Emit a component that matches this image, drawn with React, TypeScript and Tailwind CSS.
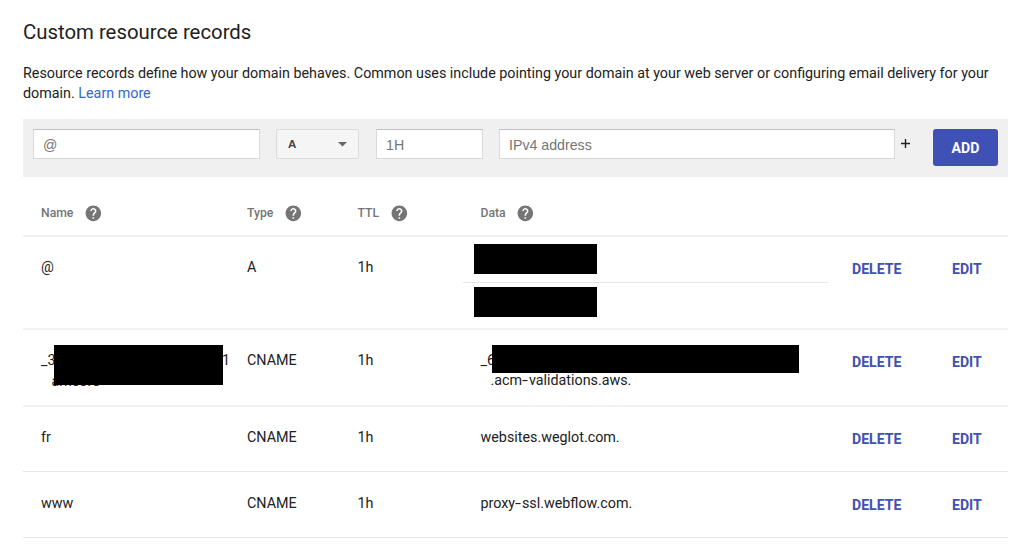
import React from "react";
import { MdHelp } from "react-icons/md";

type DnsRecord = {
  name: React.ReactNode;
  type: string;
  ttl: string;
  data: React.ReactNode;
  row: string;
};

const columns = "grid grid-cols-[206px_110.5px_123px_371.5px_100px_1fr]";

function Hyphen() {
  return <span className="mr-[2.8px] inline-block origin-left scale-x-150">-</span>;
}

const records: DnsRecord[] = [
  {
    name: "@",
    type: "A",
    ttl: "1h",
    data: (
      <div className="-mt-[13px] -ml-[17.5px] w-[365px]">
        <div className="ml-[11px] h-[30px] w-[123px] bg-black" />
        <div className="mt-2 h-px bg-[#e6e6e6]" />
        <div className="mt-1 ml-[11px] h-[30px] w-[123px] bg-black" />
      </div>
    ),
    row: "h-[93px] border-b-2 border-[#f2f2f2] pt-5",
  },
  {
    name: (
      <div className="relative">
        <div className="flex w-[189px] justify-between">
          <span>_3</span>
          <span>1</span>
        </div>
        <div className="pt-px pl-[10.5px]">amcoro</div>
        <div className="absolute top-[-5px] left-[13px] h-[40px] w-[169px] bg-black" />
      </div>
    ),
    type: "CNAME",
    ttl: "1h",
    data: (
      <div className="relative">
        <div>_6</div>
        <div className="pl-[10px]">
          .acm
          <Hyphen />
          validations.aws.
        </div>
        <div className="absolute top-[-5px] left-[11.4px] h-[28px] w-[307px] bg-black" />
      </div>
    ),
    row: "h-[77px] border-b-2 border-[#f2f2f2] pt-5",
  },
  { name: "fr", type: "CNAME", ttl: "1h", data: "websites.weglot.com.", row: "h-[65px] border-b border-[#e8e8e8] pt-5" },
  {
    name: "www",
    type: "CNAME",
    ttl: "1h",
    data: (
      <>
        proxy
        <Hyphen />
        ssl.webflow.com.
      </>
    ),
    row: "h-[66px] border-b border-[#e8e8e8] pt-[21px]",
  },
];

const headings = ["Name", "Type", "TTL", "Data"];

const field =
  "h-[30px] border border-[#d9d9d9] border-t-[#c0c0c0] bg-white px-[9px] pt-0.5 font-['Liberation_Sans',sans-serif] text-[14.2px] text-[#212121] outline-none placeholder:text-[#757575]";

export default function App() {
  return (
    <main className="h-[553px] overflow-hidden bg-white pr-4 pl-[23px] font-[Roboto,sans-serif] text-[14.32px] leading-5 text-[#212121]">
      <h1 className="pt-[20px] text-[20.35px] leading-[25px]">Custom resource records</h1>
      <p className="mt-[18px] whitespace-nowrap">
        Resource records define how your domain behaves. Common uses include pointing your domain at your web server or configuring email delivery for your
        <br />
        domain.{" "}
        <a href="#" className="text-[#3367d6]">
          Learn more
        </a>
      </p>

      <form className="mt-4 flex h-[58px] items-start bg-[#f0f0f0] pt-[10px] pl-[10px]" onSubmit={(e) => e.preventDefault()}>
        <input className={`${field} w-[227px]`} placeholder="@" aria-label="Name" />
        <button type="button" className="ml-4 flex h-[30px] w-[83px] items-center justify-between rounded-[2px] border border-[#dcdcdc] bg-[#f5f5f5] pr-[11px] pl-[11px] font-['Liberation_Sans',sans-serif] text-[11.5px] font-bold text-[#444]">
          A
          <svg width="9" height="5" viewBox="0 0 9 5" className="mt-px fill-[#666]">
            <path d="M0 0h9L4.5 4.5z" />
          </svg>
        </button>
        <input className={`${field} ml-[17px] w-[107px]`} placeholder="1H" aria-label="TTL" />
        <input className={`${field} ml-4 w-[396px]`} placeholder="IPv4 address" aria-label="Data" />
        <button type="button" className="ml-[5px] flex h-[30px] w-[10px] items-center justify-center" aria-label="Add value">
          <svg width="9" height="9" viewBox="0 0 9 9" className="-mt-0.5 fill-none stroke-[#212121] stroke-[1.4]">
            <path d="M4.5 0v9M0 4.5h9" />
          </svg>
        </button>
        <button type="submit" className="ml-[23px] h-[37px] w-[65px] rounded-[3px] bg-[#3f51b5] pt-px text-[14.1px] font-bold text-white">
          ADD
        </button>
      </form>

      <section>
        <div className={`${columns} h-[60px] items-center border-b-2 border-[#f2f2f2] pt-[14px] pl-[18px] text-[12.2px] font-medium text-[#757575]`}>
          {headings.map((label) => (
            <div key={label} className="flex items-center gap-[10.7px]">
              {label}
              <MdHelp className="size-[18.7px]" />
            </div>
          ))}
        </div>
        {records.map((record, index) => (
          <div key={index} className={`${columns} pl-[18px] ${record.row}`}>
            <div>{record.name}</div>
            <div>{record.type}</div>
            <div>{record.ttl}</div>
            <div>{record.data}</div>
            <button type="button" className="mt-0.5 h-5 text-left text-[14.1px] font-bold text-[#3f51b5]">DELETE</button>
            <button type="button" className="mt-0.5 h-5 text-left text-[14.1px] font-bold text-[#3f51b5]">EDIT</button>
          </div>
        ))}
      </section>
    </main>
  );
}
